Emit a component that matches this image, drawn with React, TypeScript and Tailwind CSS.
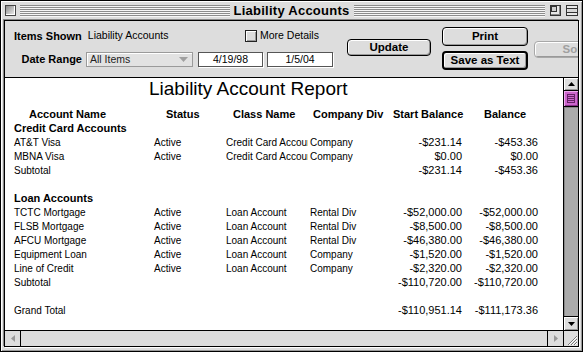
import React from "react";

// Mac OS 9 "Platinum" style report window
type Row = {
  name: string;
  status?: string;
  cls?: string;
  div?: string;
  start?: string;
  bal?: string;
  group?: boolean;
  blank?: boolean;
};

const ROWS: Row[] = [
  { name: "Credit Card Accounts", group: true },
  { name: "AT&T Visa", status: "Active", cls: "Credit Card Account", div: "Company", start: "-$231.14", bal: "-$453.36" },
  { name: "MBNA Visa", status: "Active", cls: "Credit Card Account", div: "Company", start: "$0.00", bal: "$0.00" },
  { name: "Subtotal", start: "-$231.14", bal: "-$453.36" },
  { name: "", blank: true },
  { name: "Loan Accounts", group: true },
  { name: "TCTC Mortgage", status: "Active", cls: "Loan Account", div: "Rental Div", start: "-$52,000.00", bal: "-$52,000.00" },
  { name: "FLSB Mortgage", status: "Active", cls: "Loan Account", div: "Rental Div", start: "-$8,500.00", bal: "-$8,500.00" },
  { name: "AFCU Mortgage", status: "Active", cls: "Loan Account", div: "Rental Div", start: "-$46,380.00", bal: "-$46,380.00" },
  { name: "Equipment Loan", status: "Active", cls: "Loan Account", div: "Company", start: "-$1,520.00", bal: "-$1,520.00" },
  { name: "Line of Credit", status: "Active", cls: "Loan Account", div: "Company", start: "-$2,320.00", bal: "-$2,320.00" },
  { name: "Subtotal", start: "-$110,720.00", bal: "-$110,720.00" },
  { name: "", blank: true },
  { name: "Grand Total", start: "-$110,951.14", bal: "-$111,173.36" },
];

const Stripes = () => (
  <div className="h-[12px] flex-1 bg-[image:repeating-linear-gradient(to_bottom,#8c8c8c_0px,#8c8c8c_1px,#f6f6f6_1px,#f6f6f6_2px)]" />
);

const Btn = ({ label, className = "" }: { label: string; className?: string }) => (
  <div
    className={`flex items-center justify-center rounded-[4px] bg-[#dddddd] shadow-[inset_1px_1px_0_#fff,inset_-1px_-1px_0_#999] text-[11.5px] font-bold shrink-0 ${className}`}
  >
    {label}
  </div>
);

const ReportRow = ({ row }: { row: Row }) => {
  if (row.blank) return <div className="h-[14px]" />;
  if (row.group)
    return (
      <div className="h-[14px] flex items-center pl-[9px] text-[11px] font-bold">{row.name}</div>
    );
  return (
    <div className="h-[14px] flex items-center pl-[9px] text-[10px] whitespace-nowrap">
      <div className="w-[140px]">{row.name}</div>
      <div className="w-[72px]">{row.status}</div>
      <div className="w-[82px] mr-[2px] overflow-hidden">{row.cls}</div>
      <div className="w-[72px]">{row.div}</div>
      <div className="w-[80px] text-right text-[11px]">{row.start}</div>
      <div className="w-[76px] text-right text-[11px]">{row.bal}</div>
    </div>
  );
};

export default function App() {
  return (
    <div className="w-[583px] h-[352px] border border-black bg-[#dddddd] shadow-[inset_1px_1px_0_#fff,inset_-1px_-1px_0_#999] flex flex-col overflow-hidden font-['Liberation_Sans',Arial,sans-serif] text-black">
      {/* title bar */}
      <div className="h-[19px] flex items-center shrink-0">
        <div className="flex-1 basis-0 flex items-center pl-[4px] pr-[4px] gap-[4px]">
          <div className="w-[11px] h-[11px] border border-[#444] bg-[image:linear-gradient(135deg,#8a8a8a,#f2f2f2)] shadow-[inset_-1px_-1px_0_#fff]" />
          <Stripes />
        </div>
        <div className="text-[13px] font-bold tracking-[0.25px] leading-none">Liability Accounts</div>
        <div className="flex-1 basis-0 flex items-center pl-[4px] pr-[4px] gap-[5px]">
          <Stripes />
          <svg width="11" height="11" viewBox="0 0 11 11" className="shrink-0">
            <rect x="0.5" y="0.5" width="10" height="10" fill="#e8e8e8" stroke="#333" />
            <rect x="1.5" y="1.5" width="5" height="5" fill="#cfcfcf" stroke="#333" />
            <line x1="1" y1="9.5" x2="10" y2="9.5" stroke="#888" />
            <line x1="9.5" y1="1" x2="9.5" y2="10" stroke="#888" />
          </svg>
          <svg width="12" height="11" viewBox="0 0 12 11" className="shrink-0">
            <rect x="0.5" y="0.5" width="11" height="10" fill="#e8e8e8" stroke="#333" />
            <rect x="1.5" y="4" width="9" height="3" fill="#d6d6d6" />
            <line x1="1" y1="3.5" x2="11" y2="3.5" stroke="#333" />
            <line x1="1" y1="7.5" x2="11" y2="7.5" stroke="#333" />
          </svg>
        </div>
      </div>

      {/* content frame */}
      <div className="flex-1 mx-[3px] mb-[4px] border border-black flex flex-col overflow-hidden shadow-[-1px_-1px_0_#888,1px_1px_0_#fff]">
        {/* controls */}
        <div className="h-[57px] shrink-0 border-b border-black flex items-start pl-[9px] overflow-hidden">
          <div className="w-[319px] shrink-0 flex flex-col pt-[8px]">
            <div className="h-[14px] flex items-center">
              <div className="w-[231px] flex items-center">
                <span className="text-[11px] font-bold">Items Shown</span>
                <span className="ml-[6px] text-[10.5px]">Liability Accounts</span>
              </div>
              <div className="w-[12px] h-[12px] border border-[#222] bg-[#dcdcdc] shadow-[inset_1px_1px_0_#fff,inset_-1px_-1px_0_#999]" />
              <span className="ml-[3px] text-[10.5px]">More Details</span>
            </div>
            <div className="mt-[9px] h-[15px] flex items-center">
              <div className="w-[68px] text-right text-[11px] font-bold">Date Range</div>
              <div className="ml-[4px] w-[107px] h-[15px] border border-[#9a9a9a] bg-[#e2e2e2] shadow-[inset_1px_1px_0_#fff] flex items-center pl-[3px] text-[10.5px] text-[#222]">
                All Items
                <svg width="9" height="5" viewBox="0 0 9 5" className="ml-auto mr-[4px]">
                  <polygon points="0,0 9,0 4.5,5" fill="#a0a0a0" />
                </svg>
              </div>
              <div className="ml-[5px] w-[65px] h-[15px] border border-[#555] bg-white shadow-[1px_1px_0_#fff] flex items-center justify-center text-[10.5px]">
                4/19/98
              </div>
              <div className="ml-[4px] w-[66px] h-[15px] border border-[#555] bg-white shadow-[1px_1px_0_#fff] flex items-center justify-center text-[10.5px]">
                1/5/04
              </div>
            </div>
          </div>
          <Btn label="Update" className="ml-[14px] mt-[18px] w-[84px] h-[17px] border border-black" />
          <div className="ml-[11px] mt-[6px] flex flex-col gap-[5px] shrink-0">
            <Btn label="Print" className="w-[86px] h-[19px] border border-black" />
            <Btn label="Save as Text" className="w-[86px] h-[19px] border-2 border-black" />
          </div>
          <Btn label="Sort" className="ml-[6px] mt-[20px] w-[80px] h-[17px] border border-[#a8a8a8] text-[#a0a0a0]" />
        </div>

        {/* report + vertical scroll */}
        <div className="flex-1 flex overflow-hidden">
          <div className="flex-1 bg-white overflow-hidden">
            <div className="h-[22px] leading-[22px] pl-[144px] text-[19px]">Liability Account Report</div>
            <div className="mt-[7px] h-[14px] flex items-center pl-[24px] text-[11px] font-bold whitespace-nowrap">
              <div className="w-[137px]">Account Name</div>
              <div className="w-[67px]">Status</div>
              <div className="w-[80px]">Class Name</div>
              <div className="w-[80px]">Company Div</div>
              <div className="w-[91px]">Start Balance</div>
              <div>Balance</div>
            </div>
            {ROWS.map((r, i) => (
              <ReportRow key={i} row={r} />
            ))}
          </div>
          <div className="w-[15px] border-l border-black flex flex-col bg-[#ababab]">
            <div className="h-[13px] border-b border-black bg-[#dddddd] shadow-[inset_1px_1px_0_#fff,inset_-1px_-1px_0_#999] flex items-center justify-center">
              <svg width="7" height="4" viewBox="0 0 7 4">
                <polygon points="0,4 7,4 3.5,0" fill="#000" />
              </svg>
            </div>
            <div className="h-[16px] border-b border-black bg-[#cc66cc] shadow-[inset_1px_1px_0_#eeaaee,inset_-1px_-1px_0_#883388] flex flex-col items-center justify-center">
              <div className="w-[8px] h-[9px] border border-[#662266] flex flex-col justify-evenly items-center">
                <div className="w-[6px] h-[1px] bg-[#662266]" />
                <div className="w-[6px] h-[1px] bg-[#662266]" />
                <div className="w-[6px] h-[1px] bg-[#662266]" />
              </div>
            </div>
            <div className="flex-1 shadow-[inset_1px_1px_0_#888]" />
            <div className="h-[14px] border-t border-black bg-[#dddddd] shadow-[inset_1px_1px_0_#fff,inset_-1px_-1px_0_#999] flex items-center justify-center">
              <svg width="7" height="4" viewBox="0 0 7 4">
                <polygon points="0,0 7,0 3.5,4" fill="#000" />
              </svg>
            </div>
          </div>
        </div>

        {/* horizontal scroll */}
        <div className="h-[16px] shrink-0 border-t border-black bg-[#dddddd] flex">
          <div className="w-[16px] border-r border-black flex items-center justify-center">
            <svg width="4" height="7" viewBox="0 0 4 7">
              <polygon points="4,0 4,7 0,3.5" fill="#999" />
            </svg>
          </div>
          <div className="flex-1" />
          <div className="w-[16px] border-l border-black flex items-center justify-center">
            <svg width="4" height="7" viewBox="0 0 4 7">
              <polygon points="0,0 0,7 4,3.5" fill="#999" />
            </svg>
          </div>
          <div className="w-[15px] border-l border-black flex items-center justify-center">
            <svg width="12" height="12" viewBox="0 0 12 12">
              <line x1="3" y1="12" x2="12" y2="3" stroke="#777" />
              <line x1="4" y1="12" x2="12" y2="4" stroke="#fff" />
              <line x1="6" y1="12" x2="12" y2="6" stroke="#777" />
              <line x1="7" y1="12" x2="12" y2="7" stroke="#fff" />
              <line x1="9" y1="12" x2="12" y2="9" stroke="#777" />
              <line x1="10" y1="12" x2="12" y2="10" stroke="#fff" />
            </svg>
          </div>
        </div>
      </div>
    </div>
  );
}
